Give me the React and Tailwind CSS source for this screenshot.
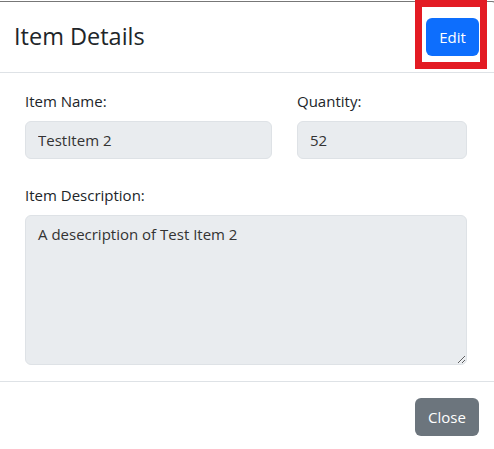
import React from 'react';

const ItemDetailsModal = () => {
  return (
    <div className="relative w-[494px] h-[449px] overflow-hidden bg-white pt-[1px] font-['Open_Sans',sans-serif] text-[#212529]">
      <div className="w-[498px] border-t border-r border-[#777] rounded-tr-[6px] bg-white">
        {/* header */}
        <div className="flex items-center justify-between h-[71px] pl-[14px] pr-[18px] border-b border-[#dee2e6]">
          <h5 className="text-[23.5px] font-medium leading-tight">Item Details</h5>
          <button className="h-[38px] w-[53px] rounded-md bg-[#0d6efd] text-white text-[15px]">Edit</button>
        </div>

        {/* body */}
        <div className="pt-4 pb-4 pl-[25px] pr-[30px] border-b border-[#dee2e6]">
          <div className="grid grid-cols-[247px_1fr] gap-x-[25px]">
            <div>
              <label className="block mb-2 text-[15px] leading-6">Item Name:</label>
              <input
                readOnly
                value="TestItem 2"
                className="w-full h-[38px] px-3 rounded-md bg-[#e9ecef] border border-[#dee2e6] text-[15px] text-[#333] outline-none"
              />
            </div>
            <div>
              <label className="block mb-2 text-[15px] leading-6">Quantity:</label>
              <input
                readOnly
                value="52"
                className="w-full h-[38px] px-3 rounded-md bg-[#e9ecef] border border-[#dee2e6] text-[15px] text-[#333] outline-none"
              />
            </div>
          </div>
          <div className="mt-6">
            <label className="block mb-2 text-[15px] leading-6">Item Description:</label>
            <textarea
              readOnly
              value="A desecription of Test Item 2"
              className="block w-full h-[150px] px-3 py-1.5 rounded-md bg-[#e9ecef] border border-[#dee2e6] text-[15px] text-[#333] leading-6 outline-none"
            />
          </div>
        </div>

        {/* footer */}
        <div className="flex justify-end pt-4 pr-[18px]">
          <button className="h-[38px] w-[64px] rounded-md bg-[#6c757d] text-white text-[15px]">Close</button>
        </div>
      </div>

      {/* annotation box around the Edit button */}
      <div className="absolute left-[415px] top-0 w-[72px] h-[69px] border-[7px] border-[#e31b23]" />
    </div>
  );
};

export default function App() {
  return <ItemDetailsModal />;
}
